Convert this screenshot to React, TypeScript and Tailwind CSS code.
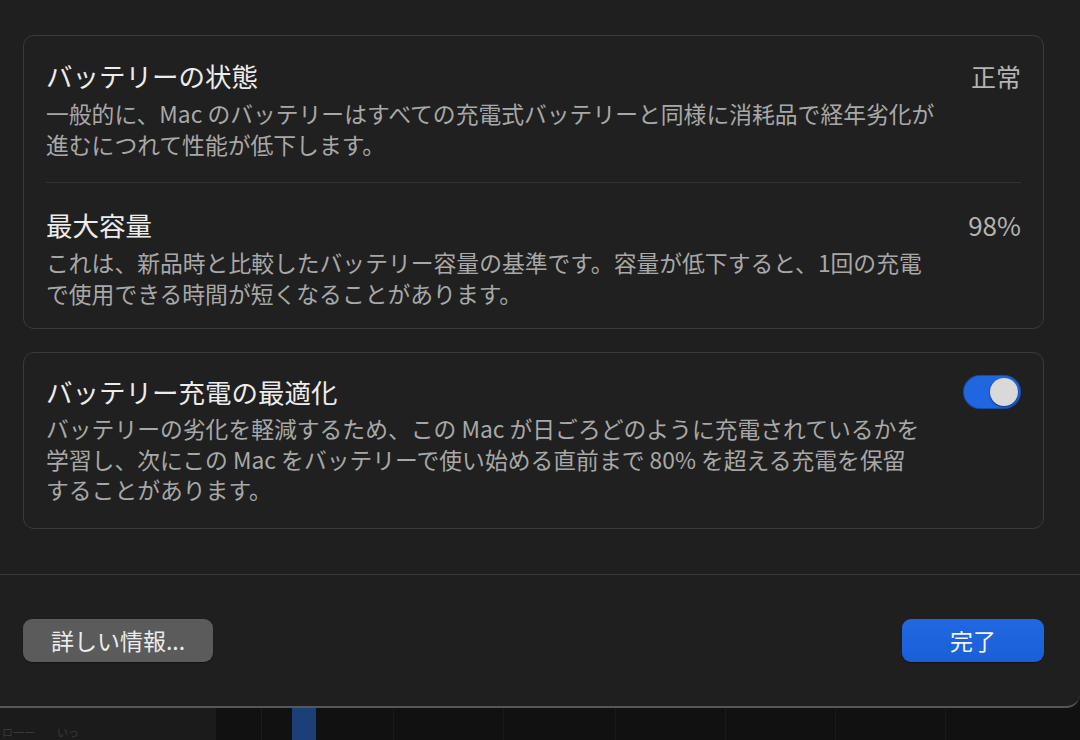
import React, { useState } from "react";

const font = { fontFamily: '"Noto Sans CJK JP", "Noto Sans", sans-serif' };

const Toggle = ({ on, onClick }: { on: boolean; onClick: () => void }) => (
    <button
        onClick={onClick}
        className={`relative w-[58px] h-[34px] rounded-full shrink-0 shadow-[inset_0_0_0_1px_rgba(0,0,0,0.25)] ${on ? "bg-[#1f66e0]" : "bg-[#444]"}`}
    >
        <span
            className={`absolute top-[3px] w-[28px] h-[28px] rounded-full bg-[#d9d9d9] shadow-[0_1px_2px_rgba(0,0,0,0.5)] ${on ? "left-[27px]" : "left-[3px]"}`}
        />
    </button>
);

const App: React.FC = () => {
    const [optimize, setOptimize] = useState(true);

    return (
        <div style={font} className="w-[1080px] h-[740px] bg-[#131313] overflow-hidden flex flex-col">
            {/* window */}
            <div className="h-[708px] bg-[#1f1f1f] border-b-2 border-[#565656] rounded-br-[14px] flex flex-col">
                <div className="pl-[23px] pr-[36px] pt-[35px] flex flex-col gap-[23px]">
                    <div className="rounded-[11px] border border-[#3a3a3a] bg-[#202020]">
                        <div className="px-[22px] pt-[23px] pb-[22px]">
                            <div className="flex justify-between items-center">
                                <div className="text-[26.5px] leading-[34px] text-[#ececec]">バッテリーの状態</div>
                                <div className="text-[25px] leading-[34px] text-[#b4b4b4]">正常</div>
                            </div>
                            <div className="mt-[5px] text-[22.8px] leading-[31px] text-[#a8a8a8] whitespace-nowrap">
                                一般的に、Mac のバッテリーはすべての充電式バッテリーと同様に消耗品で経年劣化が
                                <br />
                                進むにつれて性能が低下します。
                            </div>
                        </div>
                        <div className="mx-[22px] h-px bg-[#333333]" />
                        <div className="px-[22px] pt-[25px] pb-[19px]">
                            <div className="flex justify-between items-center">
                                <div className="text-[26.5px] leading-[34px] text-[#ececec]">最大容量</div>
                                <div className="text-[26px] leading-[34px] text-[#b4b4b4]">98%</div>
                            </div>
                            <div className="mt-[5px] text-[22.8px] leading-[31px] text-[#a8a8a8] whitespace-nowrap">
                                これは、新品時と比較したバッテリー容量の基準です。容量が低下すると、1回の充電
                                <br />
                                で使用できる時間が短くなることがあります。
                            </div>
                        </div>
                    </div>

                    <div className="rounded-[11px] border border-[#3a3a3a] bg-[#202020] px-[22px] pt-[22px] pb-[22px]">
                        <div className="flex justify-between items-center">
                            <div className="text-[26.5px] leading-[34px] text-[#ececec]">バッテリー充電の最適化</div>
                            <Toggle on={optimize} onClick={() => setOptimize(!optimize)} />
                        </div>
                        <div className="mt-[5px] text-[22.8px] leading-[30.5px] text-[#a8a8a8] whitespace-nowrap">
                            バッテリーの劣化を軽減するため、この Mac が日ごろどのように充電されているかを
                            <br />
                            学習し、次にこの Mac をバッテリーで使い始める直前まで 80% を超える充電を保留
                            <br />
                            することがあります。
                        </div>
                    </div>
                </div>

                <div className="flex-1" />

                <div className="h-[132px] border-t border-[#383838] pl-[23px] pr-[36px] flex justify-between items-center">
                    <button className="w-[190px] h-[43px] rounded-[9px] bg-[#5b5b5b] text-[23px] text-[#ececec] shadow-[0_1px_1px_rgba(0,0,0,0.4)]">
                        詳しい情報...
                    </button>
                    <button className="w-[142px] h-[43px] rounded-[9px] bg-gradient-to-b from-[#2068e2] to-[#1a5fd6] text-[23px] text-[#f4f4f4] shadow-[0_1px_1px_rgba(0,0,0,0.4)]">
                        完了
                    </button>
                </div>
            </div>

            {/* desktop strip under the window */}
            <div className="flex-1 flex">
                <div className="w-[216px] bg-[#1b1b1b] flex items-end pl-[2px] pb-[2px] text-[11px] leading-none text-[#3a3a3a]">
                    ロ一ー　　いっ
                </div>
                <div className="flex-1 bg-[#111111] flex">
                    <div className="w-[46px] border-r border-[#1c1c1c]" />
                    <div className="w-[30px]" />
                    <div className="w-[24px] bg-[#1d3f78]" />
                    <div className="w-[78px] border-r border-[#1a1a1a]" />
                    <div className="w-[110px] border-r border-[#1a1a1a]" />
                    <div className="w-[112px] border-r border-[#1a1a1a]" />
                    <div className="w-[110px] border-r border-[#1a1a1a]" />
                    <div className="w-[110px] border-r border-[#1a1a1a]" />
                    <div className="w-[110px] border-r border-[#1a1a1a]" />
                </div>
            </div>
        </div>
    );
};

export default App;
